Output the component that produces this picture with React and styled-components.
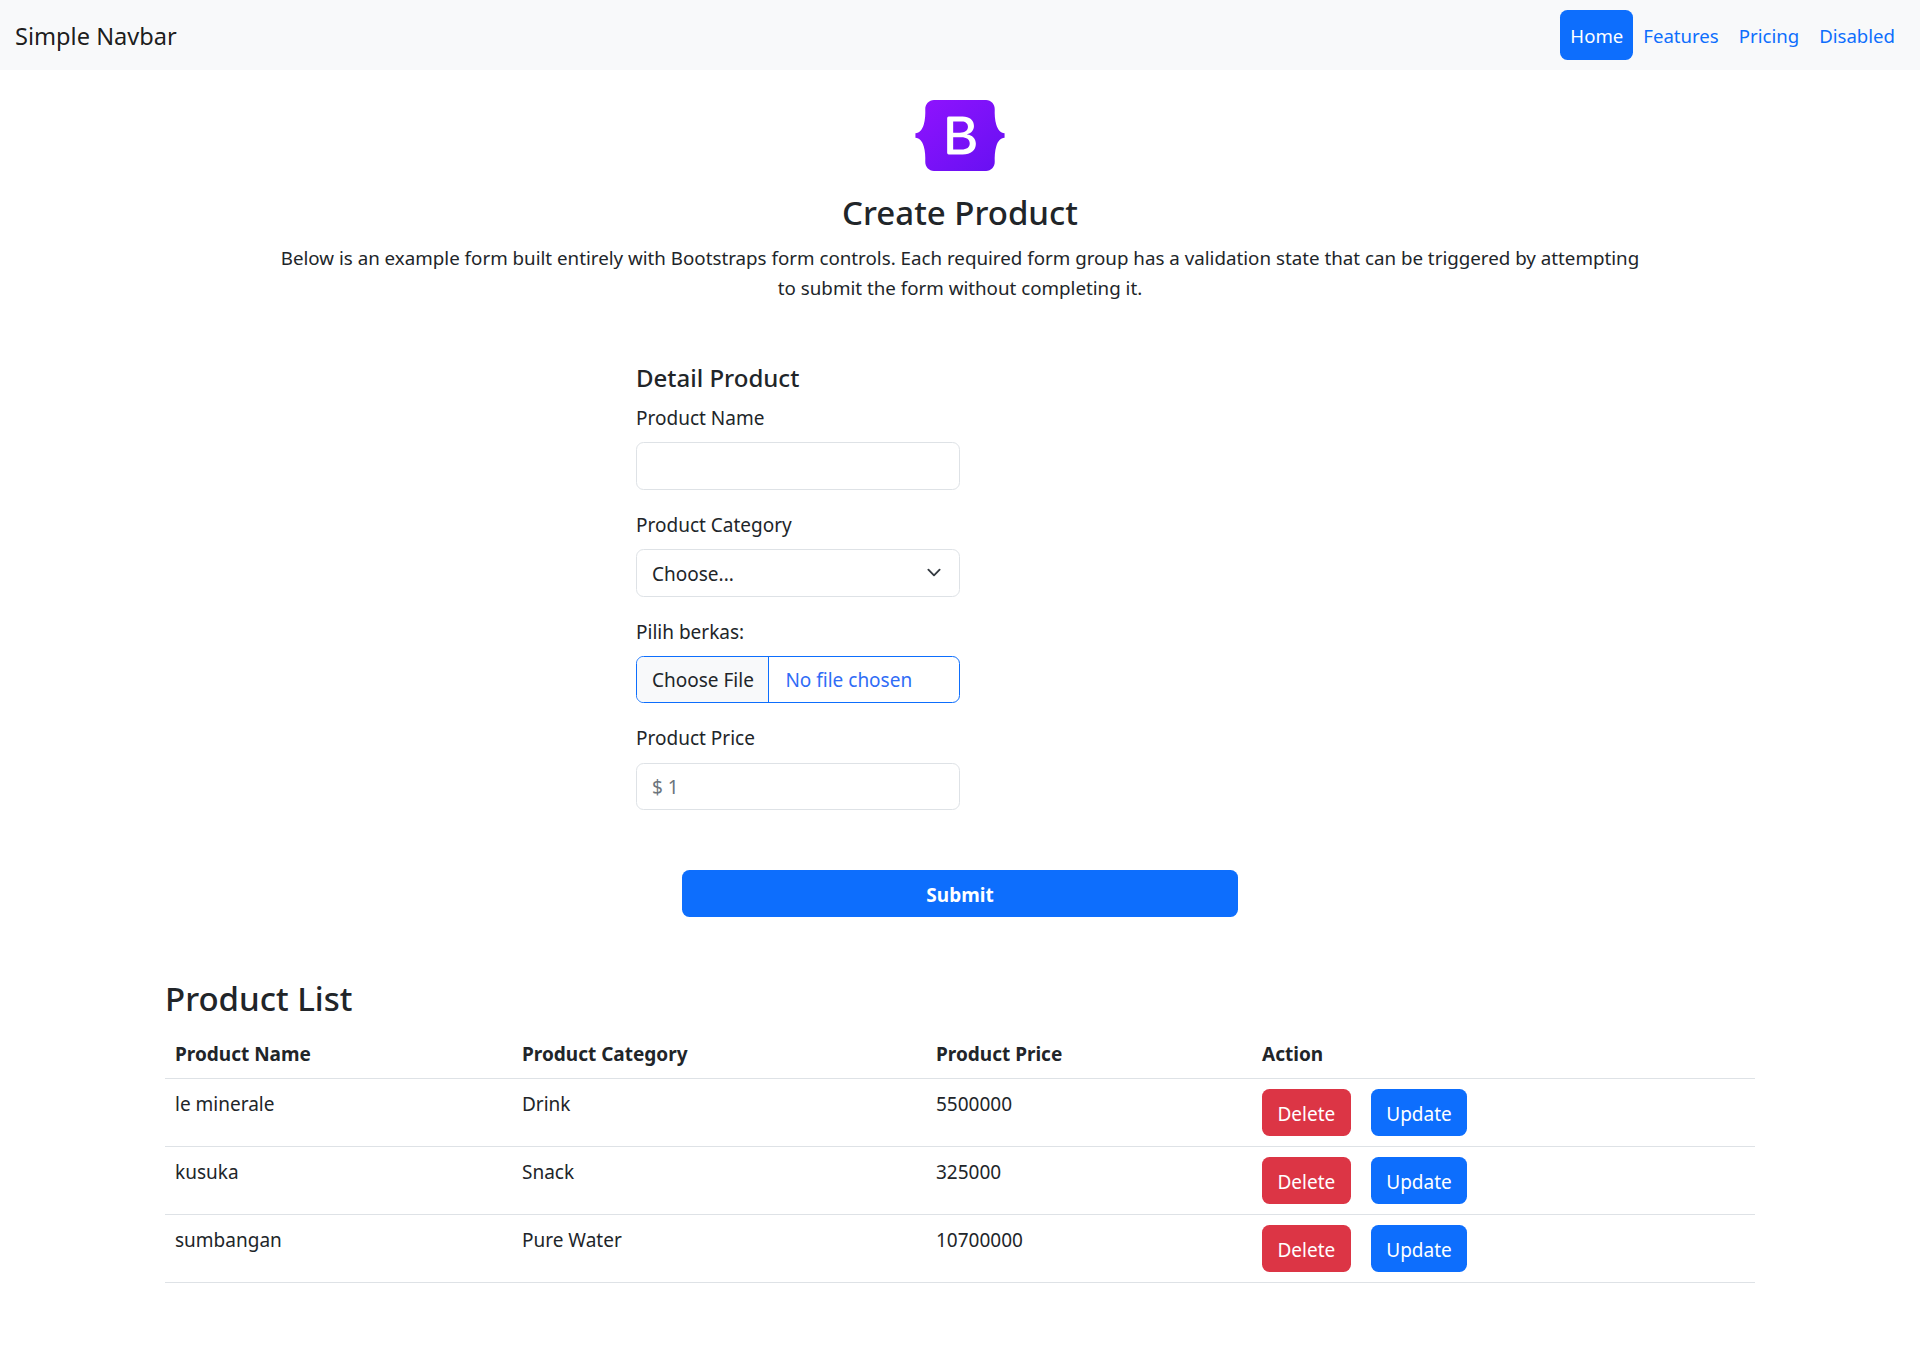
import React from 'react';
import styled, { createGlobalStyle } from 'styled-components';

const GlobalStyle = createGlobalStyle`
  * {
    box-sizing: border-box;
  }
  body {
    margin: 0;
    background: #fff;
    color: #212529;
    font-family: 'Noto Sans', 'Open Sans', sans-serif;
    font-size: 19px;
    line-height: 30px;
  }
`;

const Navbar = styled.nav`
  display: flex;
  justify-content: space-between;
  align-items: center;
  height: 70px;
  padding: 0 15px;
  background: #f8f9fa;
`;

const Brand = styled.a`
  margin-top: 1px;
  font-size: 23.6px;
  color: #000000e6;
  text-decoration: none;
`;

const NavList = styled.div`
  display: flex;
`;

const NavLink = styled.a`
  display: block;
  height: 50px;
  padding: 11px 10px 9px;
  border-radius: 7.5px;
  color: ${(p) => (p.$active ? '#fff' : '#0d6efd')};
  background: ${(p) => (p.$active ? '#0d6efd' : 'transparent')};
  font-size: 18.6px;
  text-decoration: none;
`;

const Hero = styled.header`
  display: flex;
  flex-direction: column;
  align-items: center;
  padding-top: 30px;
  text-align: center;
`;

const Logo = styled.svg`
  display: block;
  width: 90px;
  height: 71px;
`;

const Title = styled.h2`
  margin: 18px 0 0;
  font-size: 33px;
  font-weight: 500;
  line-height: 48px;
`;

const Lead = styled.p`
  width: 1375px;
  margin: 6px 0 0;
  font-size: 18.75px;
`;

const FormArea = styled.form`
  width: 1590px;
  margin: 60px auto 0;
`;

const FormColumn = styled.div`
  width: 324px;
  margin-left: 471px;
`;

const SectionTitle = styled.h4`
  margin: 0 0 10px;
  font-size: 24px;
  font-weight: 500;
  line-height: 30px;
`;

const Field = styled.div`
  margin-bottom: 20px;
`;

const Label = styled.label`
  display: block;
  margin-bottom: 9.25px;
`;

const TextInput = styled.input`
  display: block;
  width: 100%;
  height: 47.5px;
  padding: 8px 15px 6px;
  border: 1.25px solid #dee2e6;
  border-radius: 7.5px;
  background: #fff;
  color: #212529;
  font: inherit;
  outline: none;

  &::placeholder {
    color: #6c757d;
  }
`;

const Select = styled.select`
  display: block;
  width: 100%;
  height: 47.5px;
  padding: 8px 45px 6px 15px;
  border: 1.25px solid #dee2e6;
  border-radius: 7.5px;
  background: #fff url("data:image/svg+xml,%3csvg xmlns='http://www.w3.org/2000/svg' viewBox='0 0 16 16'%3e%3cpath fill='none' stroke='%23343a40' stroke-linecap='round' stroke-linejoin='round' stroke-width='2' d='m2 5 6 6 6-6'/%3e%3c/svg%3e") no-repeat right 15px center / 20px 15px;
  color: #212529;
  font: inherit;
  appearance: none;
  outline: none;
`;

const FileInput = styled.input`
  display: block;
  width: 100%;
  height: 47.5px;
  border: 1.25px solid #0d6efd;
  border-radius: 7.5px;
  background: #fff;
  color: #2f6cf6;
  font: inherit;
  line-height: 44px;
  outline: none;
  overflow: hidden;

  &::file-selector-button {
    height: 47.5px;
    margin: -2px 16px 0 0;
    padding: 2px 14.5px 0 15px;
    border: 0;
    border-right: 1.25px solid #0d6efd;
    background: #f8f9fa;
    color: #212529;
    font: inherit;
  }
`;

const SubmitRow = styled.div`
  display: flex;
  justify-content: center;
  margin-top: 60px;
`;

const Button = styled.button`
  height: 47px;
  padding: 2px 15.5px 0;
  border: 0;
  border-radius: 7.5px;
  background: ${(p) => (p.$danger ? '#dc3545' : '#0d6efd')};
  color: #fff;
  font: inherit;
`;

const SubmitButton = styled(Button)`
  width: 556px;
  font-weight: 700;
`;

const ListSection = styled.section`
  width: 1590px;
  margin: 59px auto 62px;
`;

const ListTitle = styled.h2`
  margin: 0 0 7px;
  font-size: 33px;
  font-weight: 500;
  line-height: 46px;
`;

const Table = styled.table`
  width: 100%;
  border-collapse: collapse;
  table-layout: fixed;
`;

const Column = styled.col`
  width: ${(p) => p.$width}px;
`;

const HeadCell = styled.th`
  padding: 10px 10px 9px;
  border-bottom: 1.25px solid #dee2e6;
  font-weight: 700;
  text-align: left;
`;

const Cell = styled.td`
  height: 68px;
  padding: 10px;
  border-bottom: 1.25px solid #dee2e6;
  vertical-align: top;
`;

const Actions = styled.div`
  display: flex;
  gap: 20px;
`;

const products = [
  { name: 'le minerale', category: 'Drink', price: 5500000 },
  { name: 'kusuka', category: 'Snack', price: 325000 },
  { name: 'sumbangan', category: 'Pure Water', price: 10700000 },
];

const navItems = ['Home', 'Features', 'Pricing', 'Disabled'];

function App() {
  return (
    <>
      <GlobalStyle />
      <Navbar>
        <Brand href="#">Simple Navbar</Brand>
        <NavList>
          {navItems.map((item, i) => (
            <NavLink href="#" key={item} $active={i === 0}>
              {item}
            </NavLink>
          ))}
        </NavList>
      </Navbar>
      <Hero>
        <Logo viewBox="0 0 118 94" role="img" aria-label="Bootstrap">
          <defs>
            <linearGradient id="logoFill" x1="0" y1="0" x2="1" y2="1">
              <stop offset="0" stopColor="#9013fe" />
              <stop offset="1" stopColor="#6610f2" />
            </linearGradient>
          </defs>
          <path
            fill="url(#logoFill)"
            fillRule="evenodd"
            clipRule="evenodd"
            d="M24.509 0c-6.733 0-11.715 5.893-11.492 12.284.214 6.14-.064 14.092-2.066 20.577C8.943 39.365 5.547 43.485 0 44.014v5.972c5.547.529 8.943 4.649 10.951 11.153 2.002 6.485 2.28 14.437 2.066 20.577C12.794 88.106 17.776 94 24.51 94H93.5c6.733 0 11.714-5.893 11.491-12.284-.214-6.14.064-14.092 2.066-20.577 2.009-6.504 5.396-10.624 10.943-11.153v-5.972c-5.547-.529-8.934-4.649-10.943-11.153-2.002-6.484-2.28-14.437-2.066-20.577C105.214 5.894 100.233 0 93.5 0H24.508zM80 57.863C80 66.663 73.436 72 62.543 72H44a2 2 0 01-2-2V24a2 2 0 012-2h18.437c9.083 0 15.044 4.92 15.044 12.474 0 5.302-4.01 10.049-9.119 10.88v.277C75.317 46.394 80 51.21 80 57.863zM60.521 28.34H49.948v14.934h8.905c6.884 0 10.68-2.772 10.68-7.727 0-4.643-3.264-7.207-8.012-7.207zM49.948 49.2v16.458H60.91c7.167 0 10.964-2.876 10.964-8.281 0-5.406-3.903-8.178-11.425-8.178H49.948z"
          />
        </Logo>
        <Title>Create Product</Title>
        <Lead>
          Below is an example form built entirely with Bootstraps form controls. Each required form
          group has a validation state that can be triggered by attempting to submit the form
          without completing it.
        </Lead>
      </Hero>
      <FormArea>
        <FormColumn>
          <SectionTitle>Detail Product</SectionTitle>
          <Field>
            <Label htmlFor="productName">Product Name</Label>
            <TextInput id="productName" type="text" />
          </Field>
          <Field>
            <Label htmlFor="productCategory">Product Category</Label>
            <Select id="productCategory" defaultValue="">
              <option value="">Choose...</option>
            </Select>
          </Field>
          <Field>
            <Label htmlFor="productImage">Pilih berkas:</Label>
            <FileInput id="productImage" type="file" />
          </Field>
          <Field>
            <Label htmlFor="productPrice">Product Price</Label>
            <TextInput id="productPrice" type="text" placeholder="$ 1" />
          </Field>
        </FormColumn>
        <SubmitRow>
          <SubmitButton type="button">Submit</SubmitButton>
        </SubmitRow>
      </FormArea>
      <ListSection>
        <ListTitle>Product List</ListTitle>
        <Table>
          <colgroup>
            <Column $width={347} />
            <Column $width={414} />
            <Column $width={326} />
            <Column $width={503} />
          </colgroup>
          <thead>
            <tr>
              <HeadCell>Product Name</HeadCell>
              <HeadCell>Product Category</HeadCell>
              <HeadCell>Product Price</HeadCell>
              <HeadCell>Action</HeadCell>
            </tr>
          </thead>
          <tbody>
            {products.map((p) => (
              <tr key={p.name}>
                <Cell>{p.name}</Cell>
                <Cell>{p.category}</Cell>
                <Cell>{p.price}</Cell>
                <Cell>
                  <Actions>
                    <Button type="button" $danger>
                      Delete
                    </Button>
                    <Button type="button">Update</Button>
                  </Actions>
                </Cell>
              </tr>
            ))}
          </tbody>
        </Table>
      </ListSection>
    </>
  );
}

export default App;
